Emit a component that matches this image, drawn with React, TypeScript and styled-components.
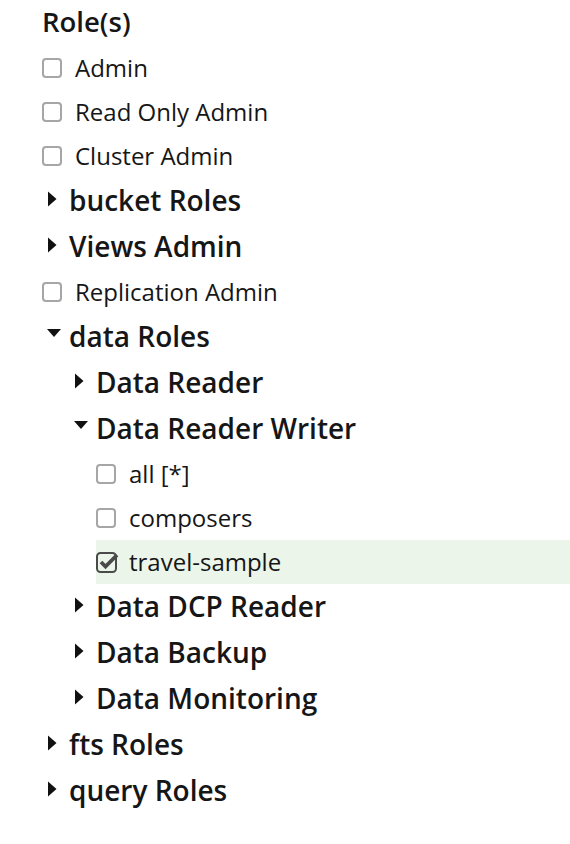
import React from 'react';
import { styled, createGlobalStyle } from 'styled-components';

const GlobalStyle = createGlobalStyle`
  html, body {
    margin: 0;
    padding: 0;
    background: #ffffff;
    font-family: "Open Sans", "Noto Sans", sans-serif;
    color: #161616;
  }
`;

type Node =
  | { kind: 'check'; label: string; checked?: boolean }
  | { kind: 'group'; label: string; open?: boolean; children?: Node[] };

const roles: Node[] = [
  { kind: 'check', label: 'Admin' },
  { kind: 'check', label: 'Read Only Admin' },
  { kind: 'check', label: 'Cluster Admin' },
  { kind: 'group', label: 'bucket Roles' },
  { kind: 'group', label: 'Views Admin' },
  { kind: 'check', label: 'Replication Admin' },
  {
    kind: 'group',
    label: 'data Roles',
    open: true,
    children: [
      { kind: 'group', label: 'Data Reader' },
      {
        kind: 'group',
        label: 'Data Reader Writer',
        open: true,
        children: [
          { kind: 'check', label: 'all [*]' },
          { kind: 'check', label: 'composers' },
          { kind: 'check', label: 'travel-sample', checked: true },
        ],
      },
      { kind: 'group', label: 'Data DCP Reader' },
      { kind: 'group', label: 'Data Backup' },
      { kind: 'group', label: 'Data Monitoring' },
    ],
  },
  { kind: 'group', label: 'fts Roles' },
  { kind: 'group', label: 'query Roles' },
];

const Panel = styled.section`
  padding-left: 42px;
  width: 528px;
`;

const Title = styled.h2`
  margin: 0;
  height: 46px;
  display: flex;
  align-items: center;
  font-size: 27.5px;
  font-weight: 600;
  line-height: 1;
  padding-bottom: 3px;
  box-sizing: border-box;
`;

const List = styled.ul<{ $indent: number }>`
  list-style: none;
  margin: 0;
  padding: 0 0 0 ${(p) => p.$indent}px;
`;

const CheckRow = styled.label<{ $checked?: boolean }>`
  height: 44px;
  box-sizing: border-box;
  padding-bottom: 2px;
  display: flex;
  align-items: center;
  gap: 13px;
  font-size: 24px;
  background: ${(p) => (p.$checked ? '#ebf5ea' : 'transparent')};
  cursor: pointer;
`;

const Box = styled.span`
  width: 20px;
  height: 20px;
  box-sizing: border-box;
  border: 2px solid #a6a6a6;
  border-radius: 4px;
  flex: none;
  margin-top: 2px;
`;

const GroupRow = styled.div`
  height: 46px;
  box-sizing: border-box;
  padding-bottom: 2px;
  display: flex;
  align-items: center;
  font-size: 28px;
  font-weight: 600;
  cursor: pointer;
`;

const Caret = styled.span`
  width: 27px;
  height: 20px;
  flex: none;
  display: flex;
  align-items: center;
  padding-left: 4px;
  box-sizing: border-box;
  margin-top: -2px;
`;

const Triangle = ({ open }: { open?: boolean }) =>
  open ? (
    <svg width="16" height="10" viewBox="0 0 16 10" style={{ marginTop: -4 }}>
      <path d="M1 1 L15 1 L8 9 Z" fill="#111" />
    </svg>
  ) : (
    <svg width="12" height="16" viewBox="0 0 12 16">
      <path d="M2 0.5 L10.5 8 L2 15.5 Z" fill="#111" />
    </svg>
  );

const CheckedBox = () => (
  <svg width="24" height="24" viewBox="0 0 24 24" style={{ flex: 'none', marginRight: -4, marginTop: 2 }}>
    <rect x="1" y="3" width="19" height="19" rx="3.5" fill="none" stroke="#4a4a4a" strokeWidth="2" />
    <path d="M5 12 L9.5 16.5 L21 5" fill="none" stroke="#4a4a4a" strokeWidth="3.8" strokeLinejoin="miter" />
  </svg>
);

const Tree = ({ nodes, indent }: { nodes: Node[]; indent: number }) => (
  <List $indent={indent}>
    {nodes.map((n) => (
      <li key={n.label}>
        {n.kind === 'check' ? (
          <CheckRow $checked={n.checked}>
            {n.checked ? <CheckedBox /> : <Box />}
            {n.label}
          </CheckRow>
        ) : (
          <>
            <GroupRow>
              <Caret>
                <Triangle open={n.open} />
              </Caret>
              {n.label}
            </GroupRow>
            {n.open && n.children && <Tree nodes={n.children} indent={27} />}
          </>
        )}
      </li>
    ))}
  </List>
);

const App: React.FC = () => (
  <>
    <GlobalStyle />
    <Panel>
      <Title>Role(s)</Title>
      <Tree nodes={roles} indent={0} />
    </Panel>
  </>
);

export default App;
